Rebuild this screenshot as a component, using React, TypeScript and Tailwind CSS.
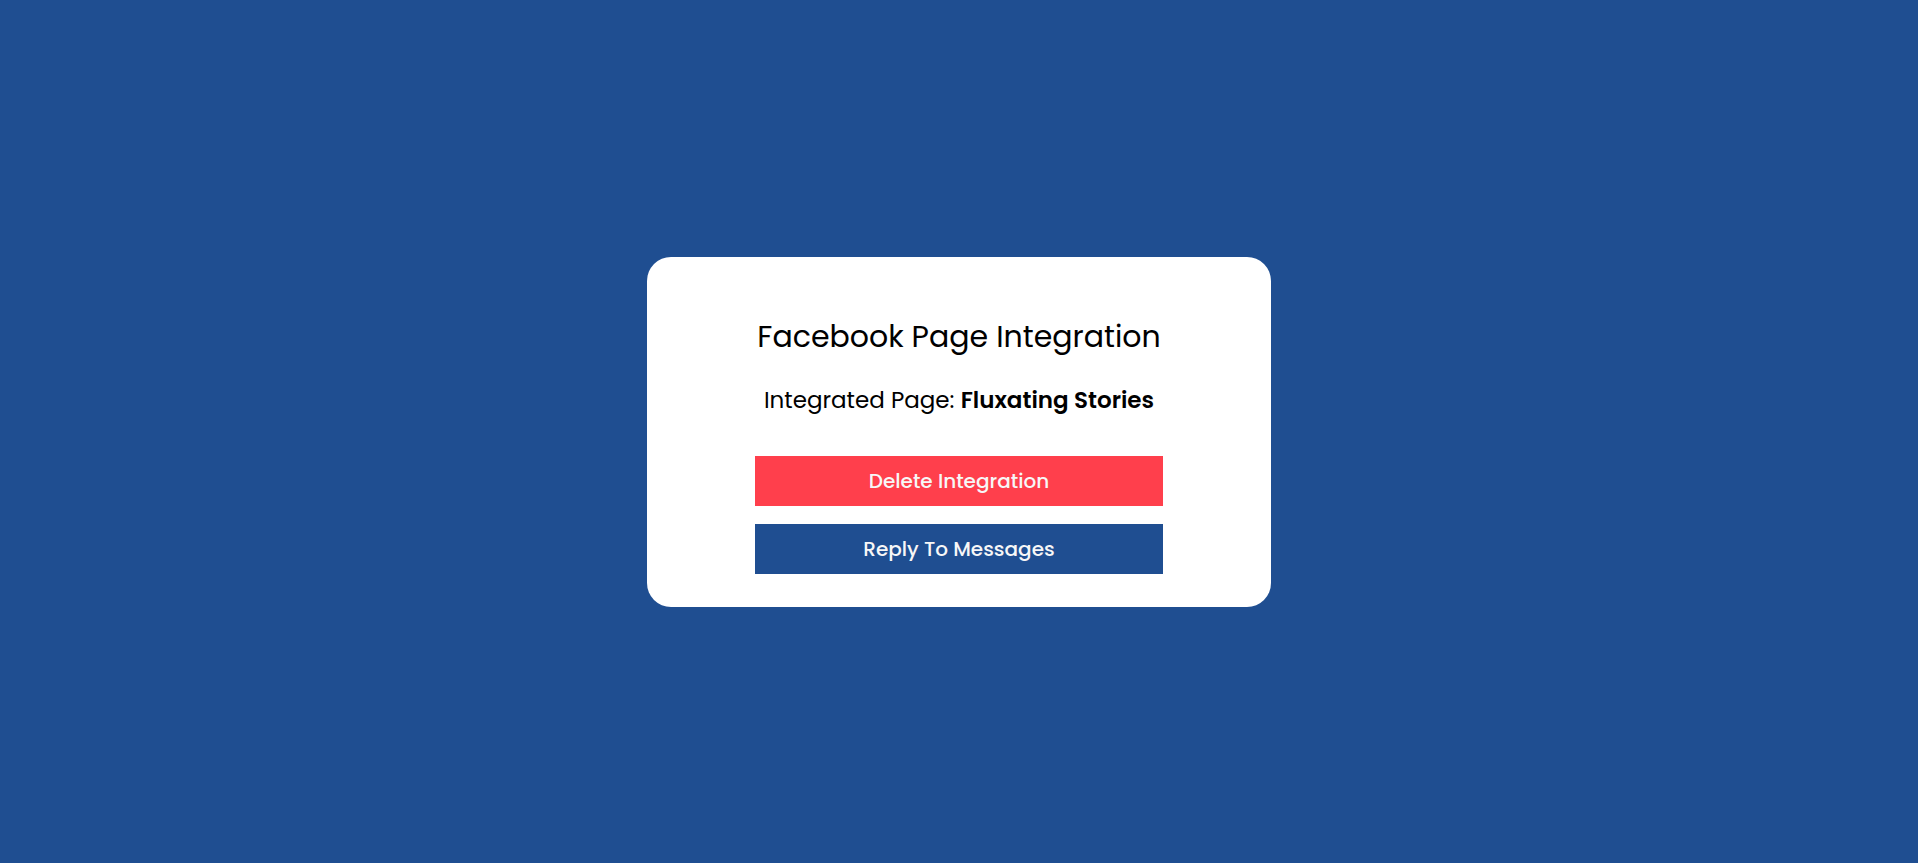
export default function App() {
  return (
    <div
      className="flex h-screen w-full items-center justify-center bg-[#1f4e91]"
      style={{ fontFamily: 'Poppins, Inter, "Noto Sans", sans-serif' }}
    >
      <div className="flex w-[624px] flex-col items-center rounded-[24px] bg-white px-[108px] pb-[33px] pt-[57px]">
        <h1 className="text-[30px] leading-[45px] font-normal text-black">Facebook Page Integration</h1>
        <p className="mt-[24px] text-[23px] leading-[34px] text-black">
          Integrated Page: <span className="font-semibold">Fluxating Stories</span>
        </p>
        <div className="mt-[39px] flex w-full flex-col gap-[18px]">
          <button className="h-[50px] w-full bg-[#ff3f4c] text-[20px] font-medium text-[#f7f7f7]">
            Delete Integration
          </button>
          <button className="h-[50px] w-full bg-[#1f4e91] text-[20px] font-medium text-[#f7f7f7]">
            Reply To Messages
          </button>
        </div>
      </div>
    </div>
  )
}
